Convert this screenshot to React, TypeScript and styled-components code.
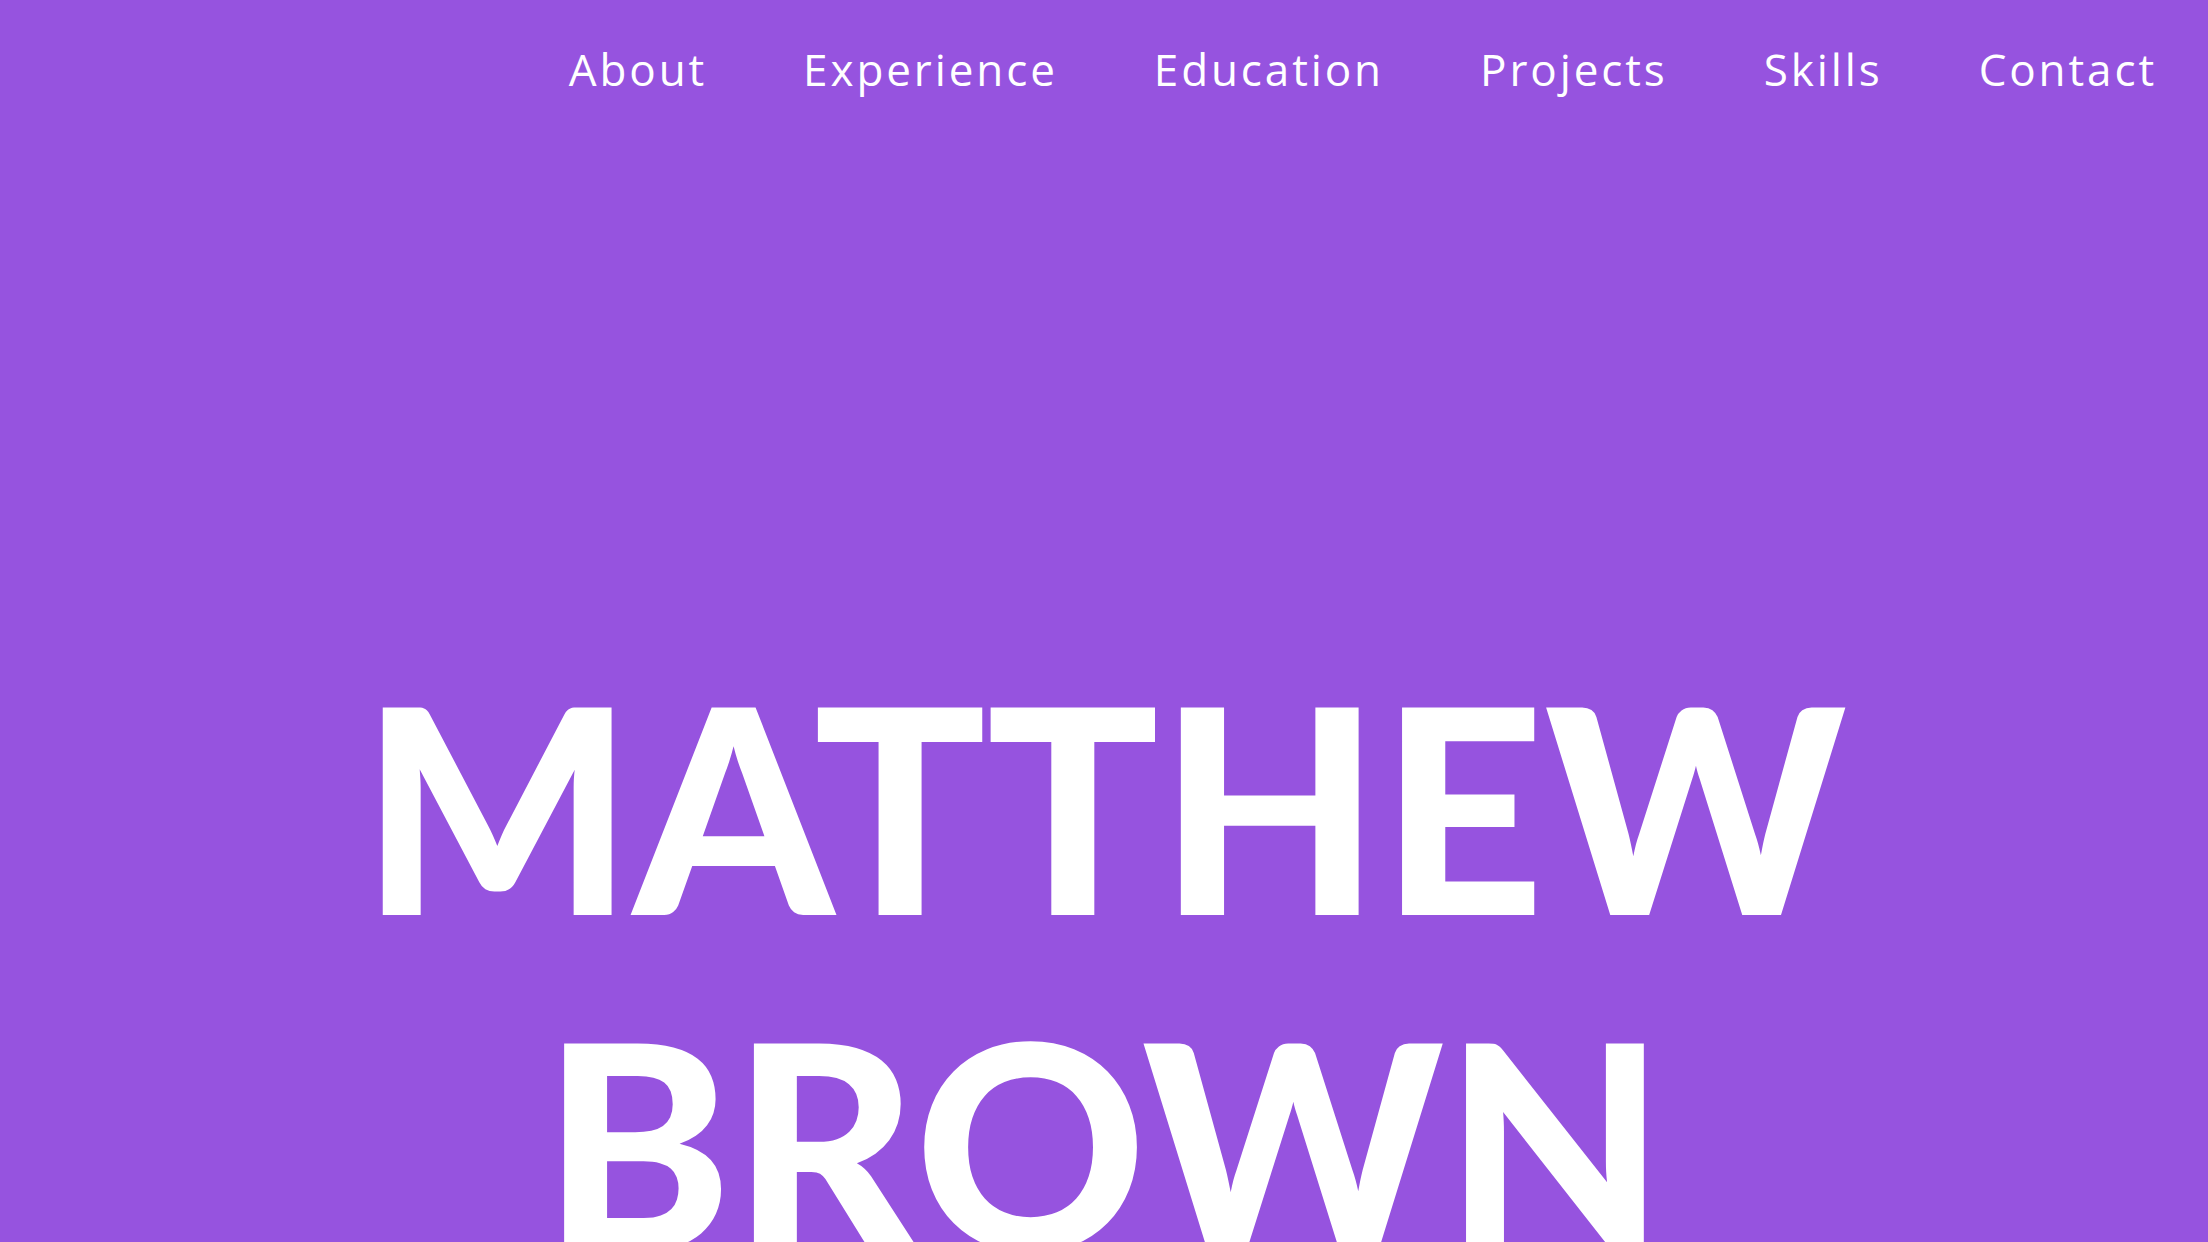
import React from 'react';
import styled, { createGlobalStyle } from 'styled-components';

const GlobalStyle = createGlobalStyle`
  html, body {
    margin: 0;
    padding: 0;
    background: #9653df;
  }

  html::-webkit-scrollbar {
    display: none;
  }

  body {
    font-family: Lato, "Open Sans", sans-serif;
    color: #ffffff;
  }
`;

const Page = styled.div`
  min-height: 100vh;
  background: #9653df;
`;

const NavBar = styled.nav`
  display: flex;
  justify-content: flex-end;
  align-items: center;
  gap: 96px;
  padding: 43px 51px 0 0;
`;

const NavLink = styled.a`
  font-family: "Open Sans", Lato, sans-serif;
  font-size: 44px;
  font-weight: 400;
  line-height: 53px;
  letter-spacing: 2.9px;
  color: #ffffff;
  text-decoration: none;
  cursor: pointer;
`;

const Hero = styled.section`
  display: flex;
  flex-direction: column;
  align-items: center;
  padding-top: 541px;
`;

const Name = styled.h1`
  margin: 0;
  font-family: Lato, sans-serif;
  font-weight: 900;
  font-size: 286px;
  line-height: 336px;
  text-align: center;
  text-transform: uppercase;
  color: #ffffff;
`;

const links = ['About', 'Experience', 'Education', 'Projects', 'Skills', 'Contact'];

const App: React.FC = () => {
  return (
    <Page>
      <GlobalStyle />
      <NavBar>
        {links.map((label) => (
          <NavLink key={label} href={`#${label.toLowerCase()}`}>
            {label}
          </NavLink>
        ))}
      </NavBar>
      <Hero>
        <Name>
          Matthew
          <br />
          Brown
        </Name>
      </Hero>
    </Page>
  );
};

export default App;
